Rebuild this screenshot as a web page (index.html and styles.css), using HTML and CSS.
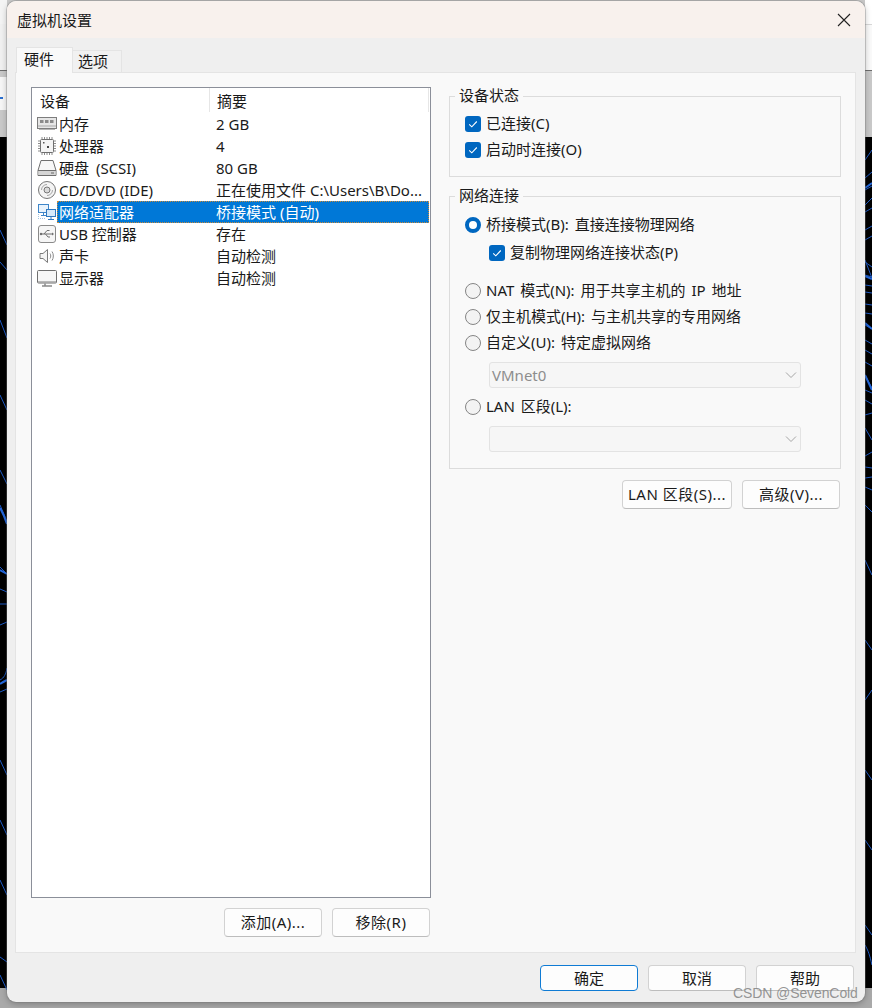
FILE: index.html
```html
<!DOCTYPE html>
<html lang="zh-CN">
<head>
<meta charset="utf-8">
<title>虚拟机设置</title>
<link rel="stylesheet" href="styles.css">
</head>
<body>
<svg class="desktop" width="872" height="1008" viewBox="0 0 872 1008" aria-hidden="true">
  <rect width="872" height="1008" fill="#c9c9c9"/>
  <rect x="0" y="0" width="7" height="24" fill="#f4f4f4"/>
  <rect x="0" y="24" width="7" height="46" fill="#f1f1f1"/>
  <rect x="0" y="70" width="7" height="1" fill="#6d6d6d"/>
  <rect x="0" y="77" width="7" height="33" fill="#f6f6f6"/>
  <rect x="0" y="97" width="3" height="2" fill="#2a6fd0"/>
  <rect x="865" y="0" width="7" height="24" fill="#ffffff"/>
  <rect x="865" y="24" width="7" height="1" fill="#d8d8d8"/>
  <rect x="865" y="25" width="7" height="45" fill="#fafafa"/>
  <rect x="865" y="70" width="7" height="1" fill="#6d6d6d"/>
  <rect x="0" y="137" width="7" height="851" fill="#000"/>
  <rect x="865" y="137" width="7" height="853" fill="#000"/>
  <rect x="0" y="988" width="872" height="20" fill="#a9a9a9"/>
  <g fill="none" stroke="#1f5cc8" stroke-width="1">
    <path d="M0 230L7 245M0 262L7 270M0 320L7 338M0 395L7 410M0 470L7 484M0 505C3 512 5 516 7 522M0 567L7 574M0 589L7 592M0 604H7M0 625L7 622M0 680C4 678 6 674 7 668M0 692L7 689M0 760L7 775M0 820L7 835M0 880L7 895M0 957L7 962M0 975L7 990"/>
    <path d="M865 160L872 150M865 178L872 172M865 190L872 186M865 205L872 198M865 212L872 208M865 230L872 226M865 240L872 236M865 260L872 278M865 262L872 267M865 275L872 277M865 285L872 286M865 292L872 293M865 304L872 305M865 313L872 314M865 325L872 329M865 340L872 344M865 350L872 354M865 362L872 366M865 375L872 388M865 390L872 393M865 400L872 404M865 415L872 413M865 428L872 440M865 456L872 452M865 467L872 468M865 478L872 477M865 487L872 490M865 505L872 512M865 560L872 575M865 640L872 650M865 700L872 690M865 770L872 780M865 840L872 850M865 925L872 935M865 945C868 950 870 956 872 965"/>
  </g>
  <g fill="none" stroke="#2468dc" stroke-width="2">
    <path d="M865 188L872 183M865 276L872 279M865 323L872 329M865 375L872 390M0 508C3 513 5 518 7 524M0 570L7 574M0 684C3 682 5 681 7 680"/>
  </g>
</svg>

<div class="window">
  <header class="titlebar">
    <span class="title">虚拟机设置</span>
    <svg class="close" width="14" height="14" viewBox="0 0 14 14" aria-label="关闭"><path d="M1 1L13 13M13 1L1 13"/></svg>
  </header>

  <nav class="tabs">
    <span class="tab tab-active">硬件</span>
    <span class="tab tab-idle">选项</span>
  </nav>

  <main class="panel">
    <section class="left">
      <div class="list">
        <div class="list-head">
          <span class="head-device">设备</span>
          <span class="head-summary">摘要</span>
        </div>

        <div class="row">
          <svg class="ico" viewBox="0 0 20 20"><rect x="0.5" y="3.5" width="19" height="11" fill="#e6e6e6" stroke="#7d7d7d"/><rect x="3" y="6" width="3.5" height="3" fill="#8a8a8a"/><rect x="8" y="6" width="3.5" height="3" fill="#8a8a8a"/><rect x="13" y="6" width="3.5" height="3" fill="#8a8a8a"/><path d="M1 12H19" stroke="#a8a8a8"/><path d="M2 15.5H18" stroke="#b5b5b5"/></svg>
          <span class="cell"><span class="name">内存</span><span class="value">2 GB</span></span>
        </div>
        <div class="row">
          <svg class="ico" viewBox="0 0 20 20"><rect x="3.5" y="3.5" width="13" height="13" rx="1" fill="#f4f4f4" stroke="#6f6f6f"/><path d="M5 1V3M7.500 1V3M10 1V3M12.500 1V3M15 1V3M5 17V19M7.500 17V19M10 17V19M12.500 17V19M15 17V19M1 5H3M1 7.500H3M1 10H3M1 12.500H3M1 15H3M17 5H19M17 7.500H19M17 10H19M17 12.500H19M17 15H19" stroke="#8c8c8c"/><rect x="6" y="6" width="1.500" height="1.500" fill="#555"/><rect x="10" y="10" width="2" height="2" fill="#444"/></svg>
          <span class="cell"><span class="name">处理器</span><span class="value">4</span></span>
        </div>
        <div class="row">
          <svg class="ico" viewBox="0 0 20 20"><path d="M4 2.500H16L19 12.500V17.500H1V12.500Z" fill="#f7f7f7" stroke="#6f6f6f"/><path d="M1 12.500H19" stroke="#6f6f6f"/><rect x="1.500" y="13" width="17" height="4" fill="#d6d6d6"/><rect x="14" y="14.500" width="3" height="1" fill="#666"/></svg>
          <span class="cell"><span class="name name-wide">硬盘 (SCSI)</span><span class="value">80 GB</span></span>
        </div>
        <div class="row">
          <svg class="ico" viewBox="0 0 20 20"><circle cx="10" cy="10" r="8.500" fill="#f4f4f4" stroke="#777"/><circle cx="10" cy="10" r="3" fill="#d9d9d9" stroke="#777"/><path d="M4.500 10A5.500 5.500 0 0 1 10 4.500M15.500 10A5.500 5.500 0 0 1 10 15.500" fill="none" stroke="#a5a5a5"/></svg>
          <span class="cell"><span class="name">CD/DVD (IDE)</span><span class="value">正在使用文件 C:\Users\B\Do...</span></span>
        </div>
        <div class="row">
          <svg class="ico" viewBox="0 0 20 20"><rect x="1.500" y="2.500" width="10" height="8" fill="#e9f3fc" stroke="#3f86c9"/><rect x="9.500" y="7.500" width="9" height="7" fill="#d5e9fa" stroke="#2f78bf"/><path d="M14 15V17M11 17.500H17" stroke="#2f78bf"/><path d="M6.500 11V13M4 13.500H9" stroke="#3f86c9"/><path d="M1 16.500H8" stroke="#9fc3e2" stroke-dasharray="1 1"/><path d="M1.500 12V17" stroke="#9fc3e2" stroke-dasharray="1 1"/></svg>
          <span class="cell cell-selected"><span class="name">网络适配器</span><span class="value">桥接模式 (自动)</span></span>
        </div>
        <div class="row">
          <svg class="ico" viewBox="0 0 20 20"><rect x="1.500" y="1.500" width="17" height="17" rx="2.500" fill="#f6f6f6" stroke="#8a8a8a"/><path d="M4 10H15M7 10L10 6.500H12.500M8.500 10L11 13H13" fill="none" stroke="#6f6f6f"/><path d="M15 8.500L17 10L15 11.500Z" fill="#6f6f6f"/><circle cx="4" cy="10" r="1.200" fill="#6f6f6f"/></svg>
          <span class="cell"><span class="name">USB 控制器</span><span class="value">存在</span></span>
        </div>
        <div class="row">
          <svg class="ico" viewBox="0 0 20 20"><path d="M3 7.500H6L10.500 3.500V16.500L6 12.500H3Z" fill="#f4f4f4" stroke="#7a7a7a"/><path d="M13 7.500C14 9 14 11 13 12.500M15 5.500C16.800 8 16.800 12 15 14.500" fill="none" stroke="#8a8a8a"/></svg>
          <span class="cell"><span class="name">声卡</span><span class="value">自动检测</span></span>
        </div>
        <div class="row">
          <svg class="ico" viewBox="0 0 20 20"><rect x="0.500" y="2.500" width="19" height="12.500" rx="1" fill="#f7f7f7" stroke="#6f6f6f"/><path d="M1 14H19" stroke="#a5a5a5" stroke-width="1.500"/><path d="M8 15.500V17.500M5 18H15" stroke="#8a8a8a" stroke-width="1.500"/></svg>
          <span class="cell"><span class="name">显示器</span><span class="value">自动检测</span></span>
        </div>
      </div>

      <div class="actions">
        <button class="btn btn-wide">添加(A)...</button>
        <button class="btn btn-wide">移除(R)</button>
      </div>
    </section>

    <section class="right">
      <div class="group group-status">
        <span class="legend">设备状态</span>
        <div class="opt"><span class="check"><svg width="16" height="16" viewBox="0 0 16 16"><path d="M4.200 8.300L6.800 10.800L11.800 5.500"/></svg></span>已连接(C)</div>
        <div class="opt"><span class="check"><svg width="16" height="16" viewBox="0 0 16 16"><path d="M4.200 8.300L6.800 10.800L11.800 5.500"/></svg></span>启动时连接(O)</div>
      </div>

      <div class="group group-net">
        <span class="legend">网络连接</span>
        <div class="opt"><span class="radio radio-on"></span>桥接模式(B): 直接连接物理网络</div>
        <div class="opt opt-sub"><span class="check"><svg width="16" height="16" viewBox="0 0 16 16"><path d="M4.200 8.300L6.800 10.800L11.800 5.500"/></svg></span>复制物理网络连接状态(P)</div>
        <div class="opt opt-gap"><span class="radio"></span>NAT 模式(N): 用于共享主机的 IP 地址</div>
        <div class="opt"><span class="radio"></span>仅主机模式(H): 与主机共享的专用网络</div>
        <div class="opt"><span class="radio"></span>自定义(U): 特定虚拟网络</div>
        <div class="combo"><span>VMnet0</span><svg width="12" height="8" viewBox="0 0 12 8"><path d="M1 1.500L6 6.500L11 1.500"/></svg></div>
        <div class="opt opt-after"><span class="radio"></span>LAN 区段(L):</div>
        <div class="combo"><span></span><svg width="12" height="8" viewBox="0 0 12 8"><path d="M1 1.500L6 6.500L11 1.500"/></svg></div>
      </div>

      <div class="net-actions">
        <button class="btn btn-lan">LAN 区段(S)...</button>
        <button class="btn btn-wide">高级(V)...</button>
      </div>
    </section>
  </main>

  <footer class="footer">
    <button class="btn btn-foot btn-primary">确定</button>
    <button class="btn btn-foot">取消</button>
    <button class="btn btn-foot">帮助</button>
  </footer>
</div>

<span class="watermark">CSDN @SevenCold</span>
</body>
</html>
```

FILE: styles.css
```css
* { box-sizing: border-box; }

html, body {
  margin: 0;
  padding: 0;
  height: 1008px;
  overflow: hidden;
}

body {
  position: relative;
  font-family: "Noto Sans", "Noto Sans CJK SC", sans-serif;
  font-size: 15px;
  line-height: 20px;
  color: #1a1a1a;
  padding: 1px 0 0 7px;
}

.desktop {
  position: absolute;
  left: 0;
  top: 0;
  z-index: -1;
}

.window {
  width: 858px;
  height: 1001px;
  display: flex;
  flex-direction: column;
  background: #efefef;
  border-radius: 9px;
  overflow: hidden;
  box-shadow: 0 0 0 1px rgba(120, 120, 120, 0.35), 0 2px 6px rgba(0, 0, 0, 0.25);
}

.titlebar {
  height: 37px;
  flex: none;
  display: flex;
  align-items: center;
  justify-content: space-between;
  padding: 0 14px 0 10px;
  background: #f8f1ed;
}

.close path {
  fill: none;
  stroke: #222;
  stroke-width: 1.1;
}

.tabs {
  height: 35px;
  flex: none;
  display: flex;
  align-items: flex-end;
  padding-left: 9px;
  margin-bottom: -1px;
  position: relative;
  z-index: 1;
}

.tab {
  display: flex;
  align-items: center;
  border: 1px solid #e4e4e4;
  border-bottom: none;
}

.tab-active {
  width: 57px;
  height: 26px;
  padding: 0 0 4px 7px;
  background: #f9f9f9;
}

.tab-idle {
  width: 49px;
  height: 22px;
  margin-bottom: 1px;
  padding: 0 0 2px 5px;
  background: #f1f1f1;
  border-left: none;
}

.panel {
  flex: none;
  width: 841px;
  height: 881px;
  margin-left: 8px;
  padding: 14px 13px 0 15px;
  display: flex;
  gap: 18px;
  background: #f9f9f9;
  border: 1px solid #e4e4e4;
}

.left {
  width: 400px;
  flex: none;
}

.list {
  height: 811px;
  padding: 0 1px 0 0;
  background: #fff;
  border: 1px solid #8b8f99;
}

.list-head {
  height: 25px;
  display: flex;
  align-items: flex-start;
}

.head-device {
  width: 178px;
  height: 24px;
  padding-left: 8px;
  line-height: 26px;
  border-right: 1px solid #e6e6e6;
}

.head-summary {
  flex: 1;
  height: 24px;
  padding-left: 7px;
  line-height: 26px;
  border-right: 1px solid #e6e6e6;
}

.row {
  height: 22px;
  display: flex;
  align-items: center;
  padding-left: 5px;
}

.ico {
  width: 20px;
  height: 20px;
  flex: none;
}

.cell {
  flex: 1;
  height: 22px;
  display: flex;
  align-items: center;
  padding-left: 2px;
}

.cell-selected {
  background: #0078d7;
  color: #fff;
  outline: 1px dotted #c98a3a;
  outline-offset: -1px;
}

.name {
  width: 157px;
  flex: none;
  white-space: nowrap;
}

.name-wide { word-spacing: 3px; }

.value { white-space: nowrap; }

.actions {
  display: flex;
  justify-content: flex-end;
  gap: 10px;
  margin-top: 10px;
  padding-right: 1px;
}

.btn {
  font: inherit;
  color: inherit;
  padding: 0 0 2px;
  height: 29px;
  letter-spacing: 0.5px;
  background: #fdfdfd;
  border: 1px solid #d2d2d2;
  border-bottom-color: #bdbdbd;
  border-radius: 4px;
  white-space: nowrap;
}

.btn-wide { width: 98px; }
.btn-lan { width: 110px; }

.btn-foot {
  width: 98px;
  height: 26px;
  padding: 0;
  letter-spacing: 0;
}

.btn-primary {
  border: 1px solid #0f7bd4;
}

.right {
  width: 392px;
  flex: none;
  padding-top: 9px;
}

.group {
  position: relative;
  border: 1px solid #dcdcdc;
  padding-left: 15px;
}

.group-status {
  height: 81px;
  padding-top: 14px;
}

.group-net {
  height: 273px;
  margin-top: 19px;
  padding-top: 15px;
}

.legend {
  position: absolute;
  left: 5px;
  top: -12px;
  padding: 0 4px;
  background: #f9f9f9;
}

.opt {
  height: 26px;
  padding-bottom: 2px;
  display: flex;
  align-items: center;
  gap: 5px;
  white-space: nowrap;
  word-spacing: 2px;
}

.opt-sub {
  margin-top: 2px;
  margin-left: 24px;
}

.opt-gap { margin-top: 12px; }
.opt-after { margin-top: 6px; }

.check {
  width: 16px;
  height: 16px;
  margin-top: 2px;
  flex: none;
  border-radius: 3px;
  background: #0067c0;
}

.check svg { display: block; }

.check path {
  fill: none;
  stroke: #fff;
  stroke-width: 1.1;
}

.radio {
  width: 16px;
  height: 16px;
  margin-top: 2px;
  flex: none;
  border-radius: 50%;
  border: 1px solid #858585;
  background: #f3f3f3;
}

.radio-on {
  border: 4.5px solid #0067c0;
  background: #fff;
}

.combo {
  width: 312px;
  height: 26px;
  margin: 6px 0 0 24px;
  padding: 0 3px 0 2px;
  display: flex;
  align-items: center;
  justify-content: space-between;
  color: #8d8d8d;
  background: #f6f6f6;
  border: 1px solid #e3e3e3;
  border-radius: 3px;
}

.combo path {
  fill: none;
  stroke: #a5a5a5;
  stroke-width: 1;
}

.net-actions {
  display: flex;
  justify-content: flex-end;
  gap: 10px;
  margin-top: 11px;
  padding-right: 1px;
}

.footer {
  flex: 1;
  display: flex;
  justify-content: flex-end;
  gap: 10px;
  padding: 12px 11px 0 0;
}

.watermark {
  position: absolute;
  left: 733px;
  top: 983px;
  font-family: "Liberation Sans", sans-serif;
  font-size: 14px;
  letter-spacing: -0.1px;
  color: rgba(130, 130, 130, 0.85);
  white-space: nowrap;
}
```
